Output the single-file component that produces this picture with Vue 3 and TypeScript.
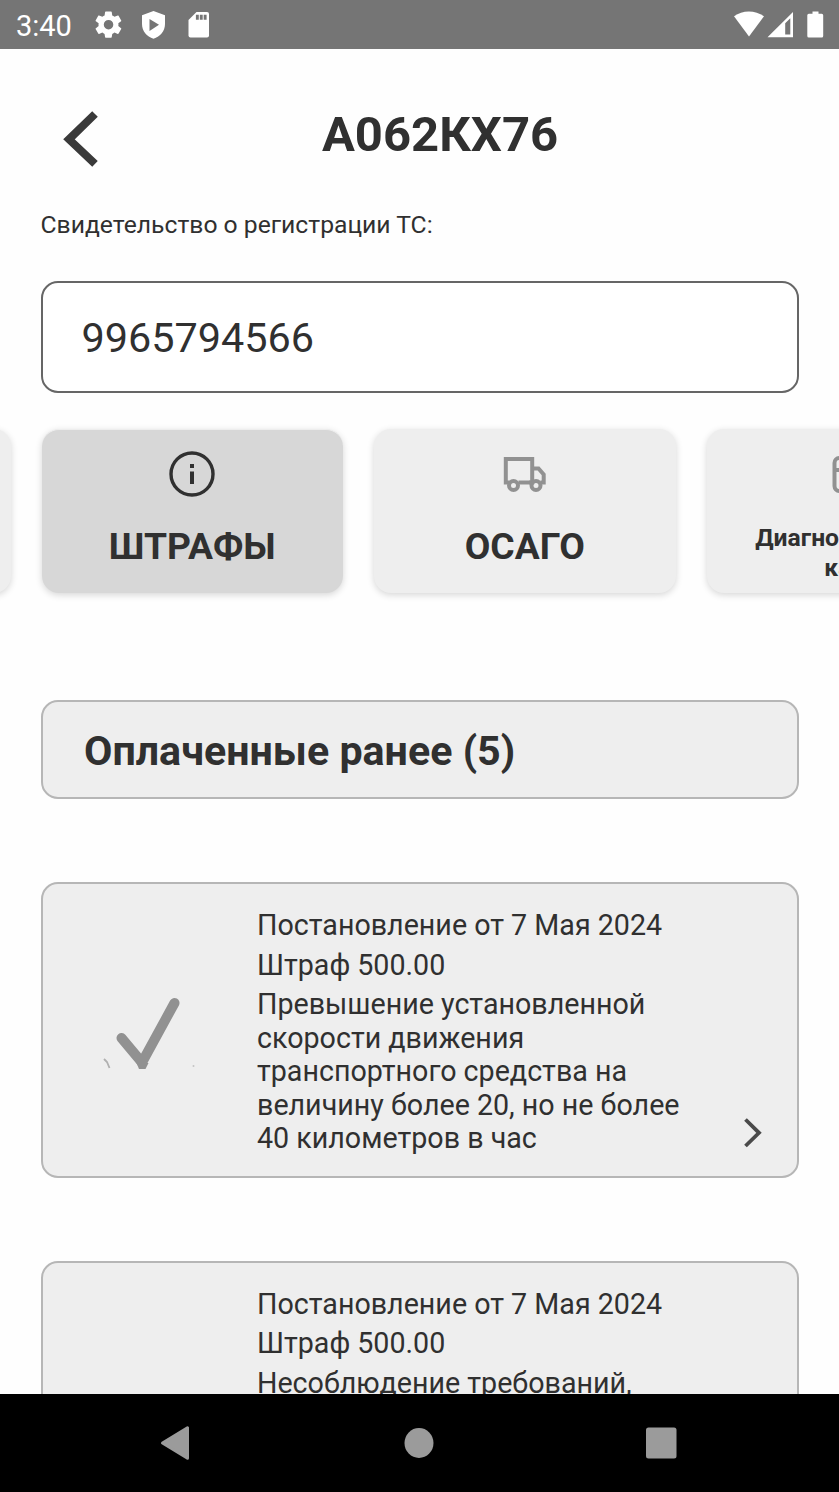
<script setup lang="ts">
interface Fine {
  date: string
  amount: string
  reason: string
}

const plate = 'А062КХ76'
const certificate = '9965794566'

const fines: Fine[] = [
  {
    date: 'Постановление от 7 Мая 2024',
    amount: 'Штраф 500.00',
    reason:
      'Превышение установленной скорости движения транспортного средства на величину более 20, но не более 40 километров в час',
  },
  {
    date: 'Постановление от 7 Мая 2024',
    amount: 'Штраф 500.00',
    reason: 'Несоблюдение требований,',
  },
]
</script>

<template>
  <div class="screen">
    <div class="status">
      <span class="clock">3:40</span>
      <svg class="status-left" width="116" height="49" viewBox="0 0 116 49">
        <g fill="#fff">
          <path
            transform="translate(-1.300 8.800) scale(1.320)"
            d="M19.400 13c0-.3.1-.6.1-1s0-.7-.1-1l2.100-1.600c.2-.2.2-.4.1-.6l-2-3.500c-.1-.2-.4-.3-.6-.2l-2.500 1c-.5-.4-1.100-.7-1.700-1l-.4-2.600c0-.3-.2-.5-.5-.5h-4c-.2 0-.5.2-.5.4l-.4 2.700c-.6.2-1.100.6-1.700 1l-2.500-1c-.2-.1-.5 0-.6.200l-2 3.500c-.1.2 0 .5.2.6L4.500 11c0 .3-.1.7-.1 1s0 .7.1 1l-2.100 1.700c-.2.1-.3.400-.2.600l2 3.500c.1.2.4.3.6.2l2.500-1c.5.4 1.100.7 1.700 1l.4 2.600c0 .2.2.4.5.4h4c.3 0 .5-.2.5-.4l.4-2.600c.6-.3 1.200-.6 1.700-1l2.500 1c.2.1.5 0 .6-.2l2-3.500c.1-.2.1-.5-.1-.6zM12 15.600a3.600 3.600 0 1 1 0-7.200 3.600 3.600 0 0 1 0 7.200z"
          />
          <path
            fill-rule="evenodd"
            d="M59.500 11 71 15.300V24c0 7-4.700 12.500-11.500 14.700C52.700 36.500 48 31 48 24v-8.700zM55.500 19v12l9.500-6.200z"
          />
          <path d="M102.500 12h10.500a2 2 0 0 1 2 2v21.500a2 2 0 0 1-2 2H96.500a2 2 0 0 1-2-2V20z" />
        </g>
        <path d="M101.900 14.700h2.900v5h-2.900zM105.800 14.700h2.900v5h-2.900zM109.700 14.700h2.900v5h-2.900z" fill="#757575" />
      </svg>
      <svg class="status-right" width="92" height="28" viewBox="0 0 92 28">
        <g fill="#fff">
          <path d="M0 5.300C4.500 2 9.300.5 14.800.5S25.500 2 30 5.300L15 25.500z" />
          <path fill-rule="evenodd" d="M33.500 26.300 59 1v25.300zM51.200 12.200v11.300h5.100V7.200z" />
          <path d="M78.500.5h6v2.300h3.200a1.500 1.500 0 0 1 1.500 1.500v20.800a1.500 1.500 0 0 1-1.500 1.500H74.800a1.500 1.500 0 0 1-1.500-1.500V4.300a1.500 1.500 0 0 1 1.500-1.500h3.700z" />
        </g>
      </svg>
    </div>

    <main class="content">
      <header class="header">
        <svg class="back" width="36" height="58" viewBox="0 0 36 58">
          <path d="M32 4 6 29.300l26 24.500" fill="none" stroke="#3a3a3a" stroke-width="8" />
        </svg>
        <h1 class="title">{{ plate }}</h1>
      </header>

      <p class="label">Свидетельство о регистрации ТС:</p>
      <div class="field">{{ certificate }}</div>

      <div class="tabs">
        <div class="tab"></div>
        <div class="tab active">
          <svg class="tab-icon" width="48" height="48" viewBox="0 0 48 48">
            <circle cx="24" cy="24" r="21" fill="none" stroke="#303030" stroke-width="3.400" />
            <path d="M22 14h4v4h-4zM22 21.500h4V34h-4z" fill="#303030" />
          </svg>
          <span class="tab-name">ШТРАФЫ</span>
        </div>
        <div class="tab">
          <svg class="tab-icon" width="48" height="48" viewBox="0 0 48 48">
            <g fill="none" stroke="#919191" stroke-width="4">
              <path d="M8.500 32.500H4.800V9h26.400v23.500H17.500" />
              <path d="M31.200 18.500h6.300l5.200 6v8h-3.200M31.200 32.500h-3" />
              <circle cx="12.500" cy="35.500" r="4.500" />
              <circle cx="35" cy="35.500" r="4.500" />
            </g>
          </svg>
          <span class="tab-name">ОСАГО</span>
        </div>
        <div class="tab">
          <svg class="tab-icon" width="52" height="48" viewBox="0 0 52 48">
            <rect x="3.500" y="8" width="45" height="33" rx="5" fill="none" stroke="#919191" stroke-width="4" />
            <path d="M3.500 20h45" stroke="#919191" stroke-width="4" />
          </svg>
          <span class="tab-name small">Диагностическая карта</span>
        </div>
      </div>

      <div class="summary">Оплаченные ранее (5)</div>

      <article v-for="(fine, i) in fines" :key="i" class="fine">
        <div class="mark">
          <svg width="96" height="76" viewBox="0 0 96 76">
            <path d="M19.500 41 40 65.500 72.500 6" fill="none" stroke="#919191" stroke-width="10" stroke-linecap="round" stroke-linejoin="bevel" />
            <path d="m34.500 66 2.500 6h6.500l3-6z" fill="#919191" />
            <path d="m2 62 3 3 2.500 6" fill="none" stroke="#b0b0b0" stroke-width="1.800" />
            <circle cx="91.500" cy="69" r="1" fill="#c4c4c4" />
          </svg>
        </div>
        <div class="details">
          <p>{{ fine.date }}</p>
          <p>{{ fine.amount }}</p>
          <p>{{ fine.reason }}</p>
        </div>
        <svg class="more" width="20" height="32" viewBox="0 0 20 32">
          <path d="M2.500 2.500 16 15.800 2.500 29" fill="none" stroke="#4a4a4a" stroke-width="3.800" />
        </svg>
      </article>
    </main>

    <nav class="navbar">
      <svg width="30" height="36" viewBox="0 0 30 36">
        <path d="M27.500 2.800v30.400L2.500 18z" fill="#9b9b9b" stroke="#9b9b9b" stroke-width="3" stroke-linejoin="round" />
      </svg>
      <svg width="32" height="32" viewBox="0 0 32 32">
        <ellipse cx="17" cy="16" rx="14.500" ry="15" fill="#9b9b9b" />
      </svg>
      <svg width="32" height="32" viewBox="0 0 32 32">
        <rect x="1" y="0.500" width="30.500" height="31" rx="2.500" fill="#9b9b9b" />
      </svg>
    </nav>
  </div>
</template>

<style>
body {
  margin: 0;
  background: #fff;
}
</style>

<style scoped>
.screen {
  width: 100%;
  height: 1492px;
  display: flex;
  flex-direction: column;
  overflow: hidden;
  background: #fefefe;
  color: #303030;
  font-family: Roboto, 'Liberation Sans', sans-serif;
}
.status {
  height: 49px;
  flex: none;
  display: flex;
  align-items: center;
  box-sizing: border-box;
  padding: 0 13px 0 16px;
  background: #757575;
}
.clock {
  width: 65px;
  padding-top: 3px;
  color: #fff;
  font-size: 29px;
  line-height: 34px;
}
.status-left {
  margin-left: 13px;
}
.status-right {
  margin-left: auto;
}
.content {
  flex: 1;
  min-height: 0;
  overflow: hidden;
}
.header {
  height: 157px;
  display: flex;
  align-items: flex-start;
}
.back {
  flex: none;
  margin: 61px 0 0 63px;
}
.title {
  flex: 1;
  margin: 56px 58px 0 0;
  font-size: 49px;
  font-weight: 700;
  line-height: 60px;
  text-align: center;
}
.label {
  margin: 0 40.500px;
  font-size: 24.700px;
  line-height: 37px;
}
.field {
  height: 112px;
  margin: 38px 40.500px 0 41px;
  padding: 1px 38.500px 0;
  box-sizing: border-box;
  display: flex;
  align-items: center;
  border: 2px solid #666;
  border-radius: 17px;
  font-size: 41.400px;
  background: #fff;
}
.tabs {
  height: 223px;
  box-sizing: border-box;
  padding-top: 36px;
  display: flex;
  gap: 31px;
  margin-left: -291px;
  width: 1130px;
  overflow: hidden;
}
.tab {
  flex: none;
  width: 301.500px;
  height: 164px;
  box-sizing: border-box;
  display: flex;
  flex-direction: column;
  align-items: center;
  padding-top: 21px;
  border-radius: 17px;
  background: #eee;
  box-shadow: 0 2px 7px rgba(0, 0, 0, 0.16);
}
.tab.active {
  background: #d7d7d7;
  border-top: 1px solid #eee;
  padding-top: 20px;
}
.tab-icon {
  flex: none;
}
.tab-name {
  height: 68px;
  margin-top: 14px;
  display: flex;
  align-items: center;
  font-size: 37.200px;
  font-weight: 700;
  line-height: 30px;
  text-align: center;
}
.tab-name.small {
  width: 230px;
  margin-top: 20.500px;
  font-size: 24.700px;
}
.summary {
  height: 99px;
  margin: 84px 40.500px 0 41px;
  padding: 3px 41px 0;
  box-sizing: border-box;
  display: flex;
  align-items: center;
  border: 2px solid #b6b6b6;
  border-radius: 17px;
  background: #eee;
  font-size: 41.200px;
  font-weight: 700;
}
.fine {
  height: 295.500px;
  margin: 83px 40.500px 0 41px;
  box-sizing: border-box;
  display: flex;
  border: 2px solid #b6b6b6;
  border-radius: 17px;
  background: #eee;
}
.mark {
  width: 214px;
  flex: none;
  display: flex;
  align-items: center;
  justify-content: center;
}
.mark svg {
  margin-top: 10px;
}
.fine + .fine .mark {
  visibility: hidden;
}
.details {
  width: 440px;
  padding-top: 25.300px;
}
.details p {
  margin: 0 0 6.200px;
  font-size: 28.650px;
  line-height: 33.400px;
}
.more {
  align-self: flex-end;
  margin: 0 0 27px 46px;
}
.navbar {
  height: 98px;
  flex: none;
  box-sizing: border-box;
  padding: 0 162px 0 160px;
  display: flex;
  align-items: center;
  justify-content: space-between;
  background: #000;
}
</style>
